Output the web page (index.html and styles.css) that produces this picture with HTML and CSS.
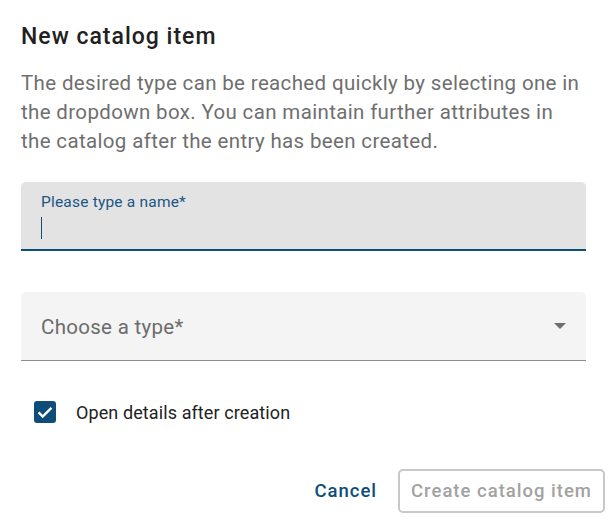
FILE: index.html
```html
<!DOCTYPE html>
<html lang="en">
<head>
    <meta charset="UTF-8">
    <title>New catalog item</title>
    <link rel="stylesheet" href="styles.css">
</head>
<body>
    <div class="dialog">
        <h2 class="dialog-title">New catalog item</h2>
        <p class="dialog-text">The desired type can be reached quickly by selecting one in the dropdown box. You can maintain further attributes in the catalog after the entry has been created.</p>

        <div class="field field-focused">
            <span class="field-label">Please type a name*</span>
            <span class="caret"></span>
        </div>

        <div class="field field-select">
            <span class="select-placeholder">Choose a type*</span>
            <span class="select-arrow"></span>
        </div>

        <label class="check-row">
            <span class="checkbox">
                <svg viewBox="0 0 24 24" width="22" height="22"><path d="M5 12.5l4.5 4.5L19 7.5" fill="none" stroke="#fff" stroke-width="2.6"/></svg>
            </span>
            <span class="check-label">Open details after creation</span>
        </label>

        <div class="dialog-actions">
            <button class="btn btn-text">Cancel</button>
            <button class="btn btn-outlined" disabled>Create catalog item</button>
        </div>
    </div>
</body>
</html>
```

FILE: styles.css
```css
* {
    margin: 0;
    padding: 0;
    box-sizing: border-box;
}

body {
    background: #fff;
    font-family: Roboto, "Liberation Sans", sans-serif;
    color: rgba(0, 0, 0, 0.87);
}

.dialog {
    width: 611px;
    padding: 22px 6px 10px 21px;
}

.dialog-title {
    font-size: 23px;
    font-weight: 500;
    line-height: 30px;
    letter-spacing: 1px;
    color: #212121;
    margin-right: 19px;
}

.dialog-text {
    margin-top: 17px;
    margin-right: 24px;
    font-size: 20.5px;
    line-height: 29px;
    letter-spacing: 0.35px;
    color: #6f6f6f;
}

.field {
    position: relative;
    height: 69px;
    margin-right: 19px;
    border-radius: 5px 5px 0 0;
}

.field-focused {
    margin-top: 26px;
    background: #e3e3e3;
    border-bottom: 2px solid #0e4d7a;
    padding: 11px 20px 0;
    display: flex;
    flex-direction: column;
}

.field-label {
    font-size: 15.5px;
    line-height: 18px;
    color: #1b5584;
    letter-spacing: 0.2px;
}

.caret {
    width: 1px;
    height: 22px;
    margin-top: 6px;
    background: #0e4d7a;
}

.field-select {
    margin-top: 41px;
    background: #f4f4f4;
    border-bottom: 1px solid #8c8c8c;
    padding: 0 20px;
    display: flex;
    align-items: center;
    justify-content: space-between;
}

.select-placeholder {
    font-size: 20.5px;
    color: #6c6c6c;
    letter-spacing: 0.3px;
    margin-top: 2px;
}

.select-arrow {
    width: 0;
    height: 0;
    border-left: 6px solid transparent;
    border-right: 6px solid transparent;
    border-top: 6px solid #6e6e6e;
}

.check-row {
    display: flex;
    align-items: center;
    margin-top: 40px;
    margin-left: 13px;
}

.checkbox {
    width: 22px;
    height: 22px;
    border-radius: 3px;
    background: #0e4d7a;
    display: flex;
}

.check-label {
    margin-left: 20px;
    font-size: 18px;
    color: #222;
    letter-spacing: 0.1px;
}

.dialog-actions {
    display: flex;
    justify-content: flex-end;
    align-items: center;
    gap: 10px;
    margin-top: 46px;
}

.btn {
    font-family: Roboto, "Liberation Sans", sans-serif;
    font-size: 18.5px;
    font-weight: 500;
    letter-spacing: 1px;
    height: 44px;
    background: transparent;
    border-radius: 5px;
}

.btn-text {
    border: none;
    color: #0e4d7a;
    padding: 0 11px;
}

.btn-outlined {
    border: 2px solid #c8c8c8;
    color: #a2a2a2;
    padding: 0 11px;
}
```
